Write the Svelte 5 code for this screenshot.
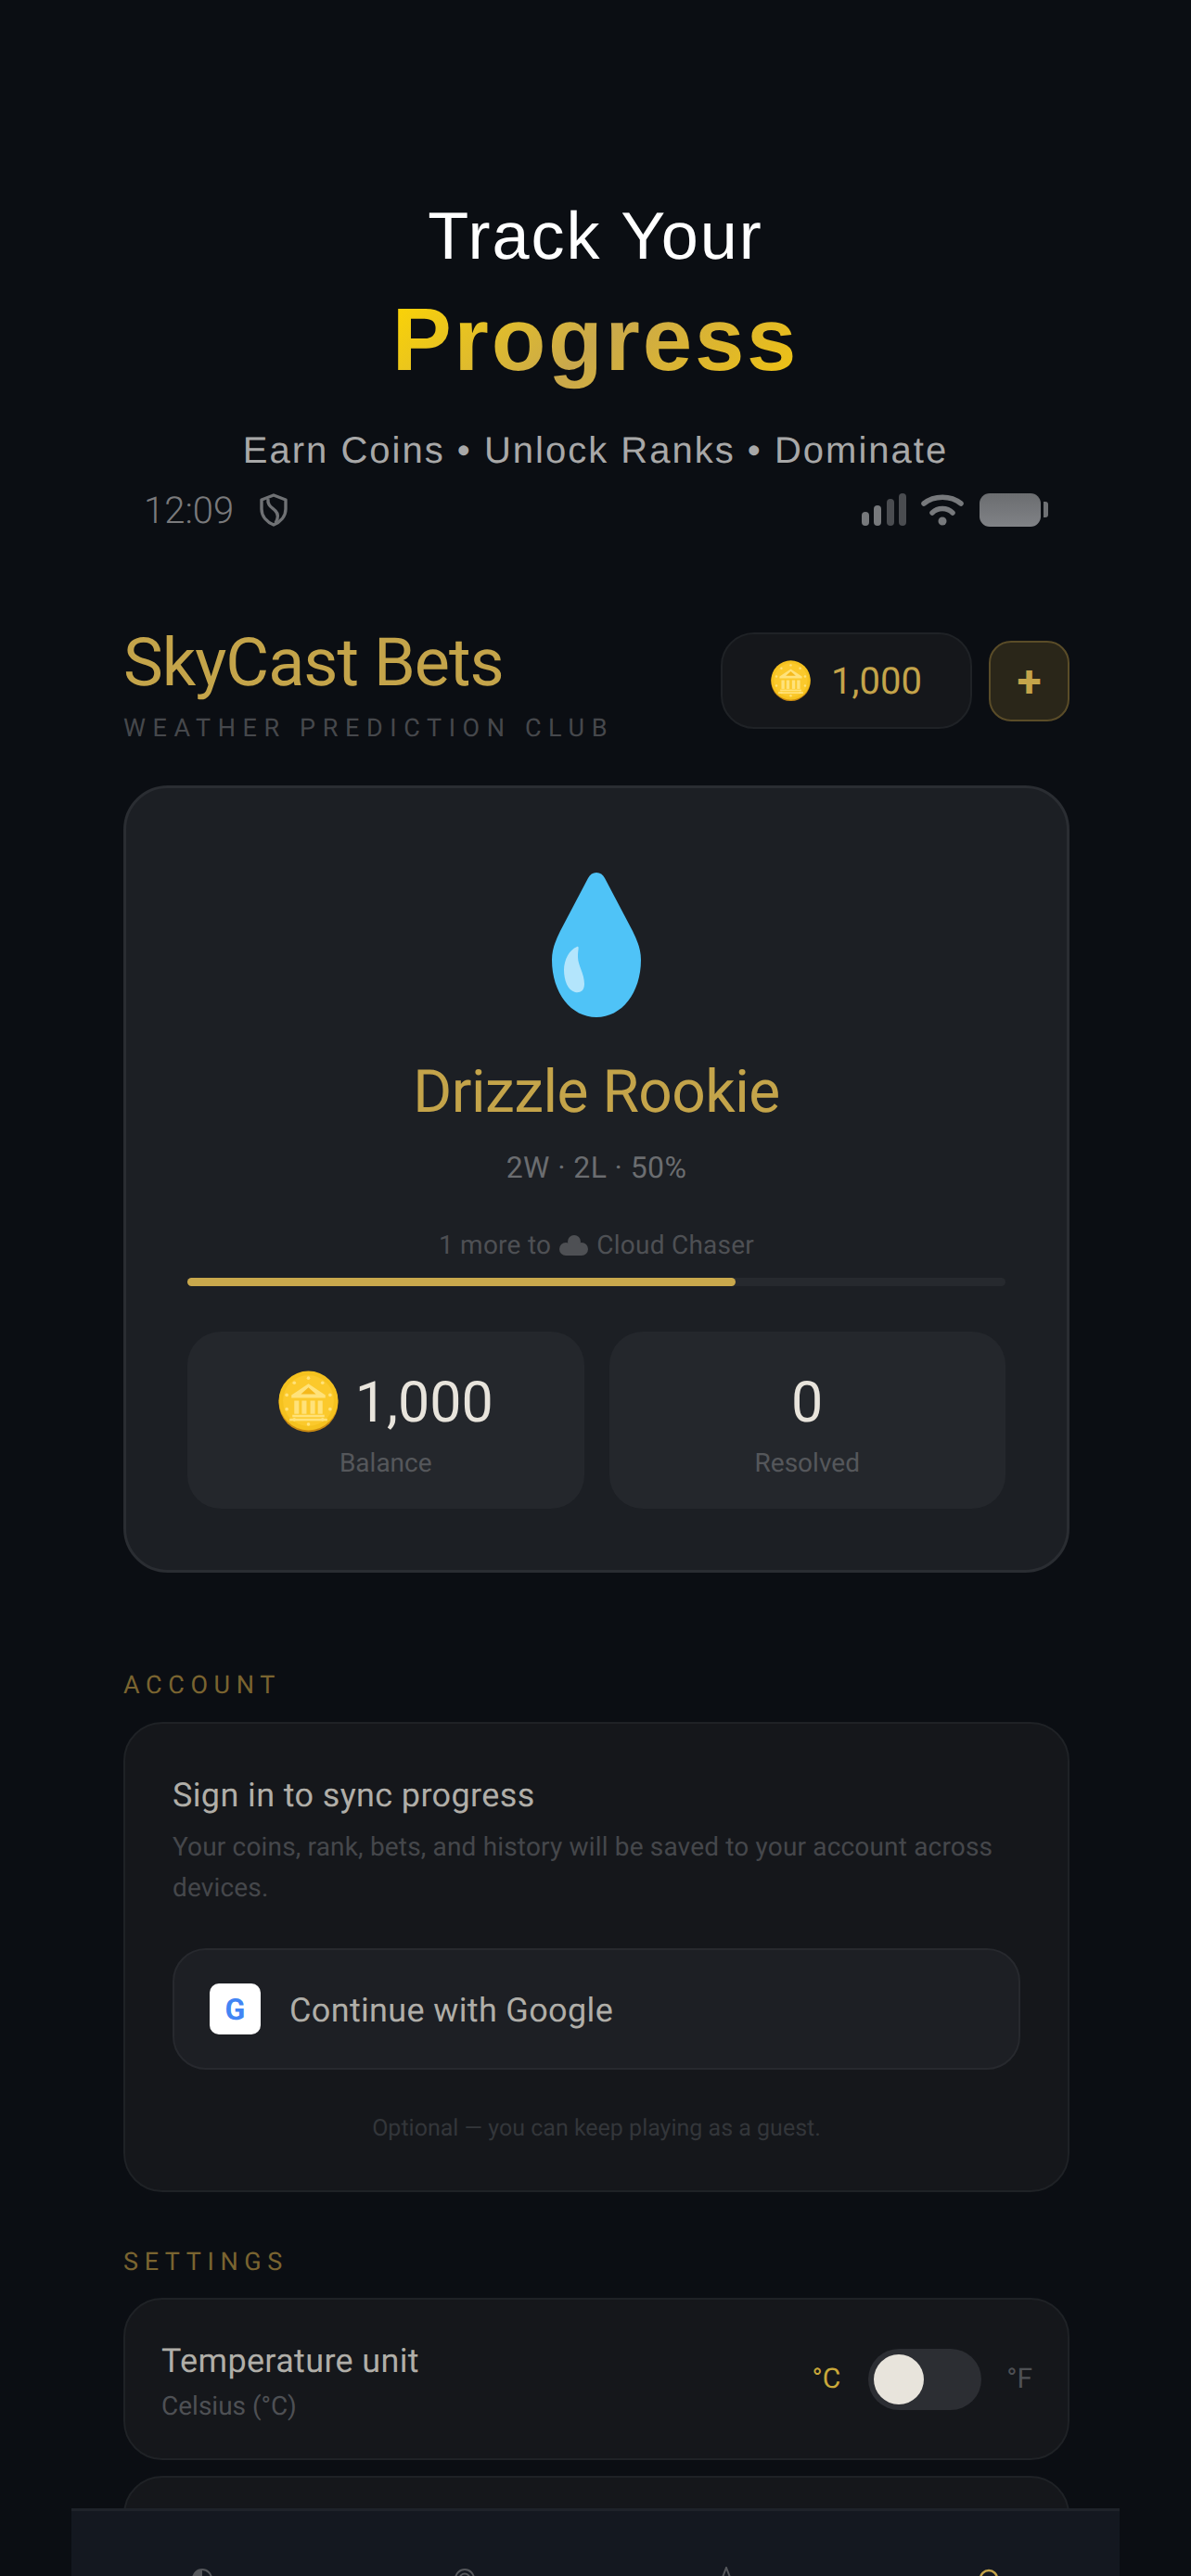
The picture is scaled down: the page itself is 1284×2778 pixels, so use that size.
<script lang="ts">
  const NAV = ['pie', 'target', 'peak', 'user'];
</script>

{#snippet coin()}
  <svg viewBox="0 0 64 66" aria-hidden="true">
    <circle cx="32" cy="34" r="31.5" fill="#c98a12" />
    <circle cx="32" cy="32" r="31.5" fill="#f5c21f" />
    <circle cx="32" cy="32" r="27" fill="#fbc92c" />
    <g fill="#ffe27a">
      <circle cx="32" cy="8" r="1.8" />
      <circle cx="17" cy="13" r="1.8" />
      <circle cx="47" cy="13" r="1.8" />
      <circle cx="9" cy="26" r="1.8" />
      <circle cx="55" cy="26" r="1.8" />
      <circle cx="9" cy="41" r="1.8" />
      <circle cx="55" cy="41" r="1.8" />
      <circle cx="17" cy="52" r="1.8" />
      <circle cx="47" cy="52" r="1.8" />
      <circle cx="32" cy="57" r="1.8" />
      <path d="M32 14 L14 26 V29 H50 V26 Z" />
      <rect x="17" y="32" width="5" height="14" />
      <rect x="25" y="32" width="5" height="14" />
      <rect x="34" y="32" width="5" height="14" />
      <rect x="42" y="32" width="5" height="14" />
      <rect x="15" y="47" width="34" height="2.5" />
      <rect x="12" y="51" width="40" height="2.5" />
    </g>
    <path d="M32 18 L24 25 H40 Z" fill="#f5b91c" />
  </svg>
{/snippet}

<div class="page">
  <header class="hero">
    <div class="hero-line">Track Your</div>
    <div class="hero-big">Progress</div>
    <div class="hero-sub">Earn Coins • Unlock Ranks • Dominate</div>
  </header>

  <div class="phone">
    <div class="status">
      <div class="status-left">
        <span class="time">12:09</span>
        <svg class="shield" viewBox="0 0 30 36" aria-hidden="true">
          <path d="M15 2 L28 7 V17 C28 25 22 31 15 34 C8 31 2 25 2 17 V7 Z" fill="none" stroke="#6f7174" stroke-width="3.4" stroke-linejoin="round" />
          <path d="M9 6 C8 13 13 15 17 19 C20 22 20 27 17 32" fill="none" stroke="#6f7174" stroke-width="3.4" />
        </svg>
      </div>
      <div class="status-right">
        <svg class="signal" viewBox="0 0 48 36" aria-hidden="true">
          <rect x="0" y="20" width="8" height="15" rx="4" fill="#77797c" />
          <rect x="13" y="13" width="8" height="22" rx="4" fill="#77797c" />
          <rect x="27" y="6" width="8" height="29" rx="4" fill="#4a4c50" />
          <rect x="40" y="0" width="8" height="35" rx="4" fill="#4a4c50" />
        </svg>
        <svg class="wifi" viewBox="0 0 46 36" aria-hidden="true">
          <path d="M3 11 C14 2 32 2 43 11" fill="none" stroke="#77797c" stroke-width="5.5" stroke-linecap="round" />
          <path d="M12 21 C18 15 28 15 34 21" fill="none" stroke="#77797c" stroke-width="5.5" stroke-linecap="round" />
          <circle cx="23" cy="30" r="4.5" fill="#77797c" />
        </svg>
        <span class="battery"><span class="battery-tip"></span></span>
      </div>
    </div>

    <main class="content">
      <div class="top">
        <div>
          <h1 class="brand">SkyCast Bets</h1>
          <div class="tagline">WEATHER PREDICTION CLUB</div>
        </div>
        <div class="wallet">
          <div class="pill">
            <span class="coin-sm">{@render coin()}</span>
            <span>1,000</span>
          </div>
          <button class="plus">+</button>
        </div>
      </div>

      <section class="rank-card">
        <svg class="drop" viewBox="0 0 96 158" aria-hidden="true">
          <path d="M48 1 C52 1 55 3 57 7 L87 64 C92 74 96 84 96 95 C96 131 75 157 48 157 C21 157 0 131 0 95 C0 84 4 74 9 64 L39 7 C41 3 44 1 48 1 Z" fill="#4fc3f7" />
          <path d="M27 81 C30 80 28 84 28 92 C28 101 35 110 35 121 C35 129 30 131 25 130 C17 128 13 117 13 106 C13 95 19 84 27 81 Z" fill="#b3e5fc" />
        </svg>
        <h2 class="rank-name">Drizzle Rookie</h2>
        <div class="record">2W · 2L · 50%</div>
        <div class="next">
          1 more to
          <svg class="cloud" viewBox="0 0 33 22" aria-hidden="true">
            <g fill="#4e5054">
              <circle cx="17" cy="7" r="7" />
              <circle cx="8" cy="15" r="7" />
              <circle cx="25" cy="15" r="7" />
              <rect x="8" y="10" width="17" height="12" />
            </g>
          </svg>
          Cloud Chaser
        </div>
        <div class="bar"><div class="bar-fill" style="width: 67%"></div></div>
        <div class="stats">
          <div class="stat">
            <div class="stat-value"><span class="coin-lg">{@render coin()}</span>1,000</div>
            <div class="stat-label">Balance</div>
          </div>
          <div class="stat">
            <div class="stat-value">0</div>
            <div class="stat-label">Resolved</div>
          </div>
        </div>
      </section>

      <div class="section-label account-label">ACCOUNT</div>
      <section class="account-card">
        <div class="sign-title">Sign in to sync progress</div>
        <p class="sign-desc">Your coins, rank, bets, and history will be saved to your account across devices.</p>
        <button class="google">
          <span class="g-box">G</span>
          <span class="google-text">Continue with Google</span>
        </button>
        <div class="optional">Optional — you can keep playing as a guest.</div>
      </section>

      <div class="section-label settings-label">SETTINGS</div>
      <section class="setting">
        <div class="setting-text">
          <div class="setting-title">Temperature unit</div>
          <div class="setting-sub">Celsius (°C)</div>
        </div>
        <div class="unit-switch">
          <span class="unit on">°C</span>
          <span class="toggle"><span class="knob"></span></span>
          <span class="unit">°F</span>
        </div>
      </section>
      <section class="setting next-setting"></section>
    </main>

    <nav class="nav">
      {#each NAV as item, i (item)}
        <div class="nav-item">
          <svg viewBox="0 0 48 48" aria-hidden="true">
            {#if i === 0}
              <circle cx="24" cy="13" r="10" fill="none" stroke="#55575b" stroke-width="2" />
              <path d="M24 3 A10 10 0 0 0 24 23 Z" fill="#55575b" />
            {:else if i === 1}
              <circle cx="24" cy="13" r="10" fill="none" stroke="#55575b" stroke-width="2" />
              <circle cx="24" cy="13" r="5.5" fill="none" stroke="#55575b" stroke-width="2" />
            {:else if i === 2}
              <path d="M24 1 L36 32 H12 Z" fill="none" stroke="#55575b" stroke-width="2" />
            {:else}
              <circle cx="24" cy="13" r="9" fill="none" stroke="#c4a44a" stroke-width="2.5" />
            {/if}
          </svg>
        </div>
      {/each}
    </nav>
  </div>
</div>

<style>
  :global(body) {
    margin: 0;
    background: #0b0e13;
  }

  .page {
    height: 2778px;
    overflow: hidden;
    display: flex;
    flex-direction: column;
    align-items: center;
    font-family: Roboto, sans-serif;
    text-rendering: geometricPrecision;
    background: #0b0e13;
  }

  .hero {
    padding-top: 210px;
    text-align: center;
    font-family: 'Liberation Sans', Arial, sans-serif;
  }

  .hero-line {
    font-size: 72px;
    line-height: 90px;
    letter-spacing: 2px;
    color: #fff;
  }

  .hero-big {
    display: inline-block;
    margin-top: 12px;
    font-size: 96px;
    line-height: 110px;
    font-weight: 700;
    letter-spacing: 2.8px;
    background: linear-gradient(135deg, #ffd700, #c9a84c, #f1c40f);
    -webkit-background-clip: text;
    background-clip: text;
    color: transparent;
  }

  .hero-sub {
    margin-top: 40px;
    font-size: 40px;
    line-height: 48px;
    letter-spacing: 2px;
    color: #a8a8a8;
  }

  .phone {
    position: relative;
    width: 1132px;
    flex: 1;
    min-height: 0;
    padding-top: 16px;
  }

  .status {
    display: flex;
    justify-content: space-between;
    align-items: center;
    height: 48px;
    padding: 0 76px 0 79px;
  }

  .status-left,
  .status-right {
    display: flex;
    align-items: center;
  }

  .time {
    font-size: 40px;
    font-weight: 300;
    color: #7a7a7c;
  }

  .shield {
    width: 30px;
    height: 36px;
    margin-left: 28px;
  }

  .signal {
    width: 48px;
    height: 36px;
  }

  .wifi {
    width: 46px;
    height: 36px;
    margin-left: 16px;
  }

  .battery {
    position: relative;
    width: 66px;
    height: 36px;
    margin-left: 17px;
    margin-right: 10px;
    border-radius: 11px;
    background: linear-gradient(#6b6d70, #808286);
  }

  .battery-tip {
    position: absolute;
    left: 69px;
    top: 9px;
    width: 5px;
    height: 17px;
    border-radius: 0 3px 3px 0;
    background: #6f7174;
  }

  .content {
    padding: 0 55px 0 57px;
  }

  .top {
    display: flex;
    justify-content: space-between;
    align-items: center;
    margin-top: 99px;
  }

  .brand {
    margin: 0;
    font-size: 72px;
    line-height: 84px;
    font-weight: 400;
    letter-spacing: -1px;
    color: #c4a44a;
  }

  .tagline {
    margin-top: 12px;
    font-size: 27px;
    line-height: 32px;
    letter-spacing: 7.6px;
    color: #46484c;
  }

  .wallet {
    display: flex;
    align-items: center;
    gap: 18px;
    margin-top: -6px;
  }

  .pill {
    display: flex;
    align-items: center;
    justify-content: center;
    gap: 22px;
    width: 271px;
    height: 104px;
    box-sizing: border-box;
    border: 2px solid #1f2226;
    border-radius: 36px;
    background: #15171b;
    font-size: 40px;
    color: #c4a44a;
  }

  .coin-sm {
    display: block;
    width: 43px;
  }

  .coin-lg {
    display: block;
    width: 65px;
    margin-right: 18px;
  }

  .coin-sm svg,
  .coin-lg svg {
    display: block;
    width: 100%;
  }

  .plus {
    width: 87px;
    height: 87px;
    padding: 0;
    border: 2px solid #5a4c28;
    border-radius: 24px;
    background: #2a2619;
    font-family: Roboto, sans-serif;
    font-size: 48px;
    font-weight: 700;
    color: #c4a44a;
  }

  .rank-card {
    display: flex;
    flex-direction: column;
    align-items: center;
    box-sizing: border-box;
    height: 849px;
    margin-top: 46px;
    padding: 90px 66px 0;
    border: 3px solid #2a2d32;
    border-radius: 48px;
    background: #1c1f24;
  }

  .drop {
    width: 96px;
    height: 158px;
  }

  .rank-name {
    margin: 42px 0 0;
    font-size: 64px;
    line-height: 76px;
    font-weight: 400;
    letter-spacing: -0.5px;
    color: #c4a44a;
  }

  .record {
    margin-top: 23px;
    font-size: 32px;
    line-height: 40px;
    letter-spacing: 0.4px;
    color: #6b6d70;
  }

  .next {
    display: flex;
    align-items: center;
    gap: 8px;
    margin-top: 46px;
    font-size: 28px;
    line-height: 36px;
    letter-spacing: 0.25px;
    color: #4e5054;
  }

  .cloud {
    width: 33px;
    height: 22px;
  }

  .bar {
    width: 100%;
    height: 9px;
    margin-top: 17px;
    border-radius: 5px;
    background: #26292e;
  }

  .bar-fill {
    height: 100%;
    border-radius: 5px;
    background: #c9a84c;
  }

  .stats {
    display: grid;
    grid-template-columns: 1fr 1fr;
    gap: 27px;
    width: 100%;
    margin-top: 49px;
  }

  .stat {
    display: flex;
    flex-direction: column;
    align-items: center;
    height: 191px;
    box-sizing: border-box;
    padding-top: 40px;
    border-radius: 36px;
    background: #24272c;
  }

  .stat-value {
    display: flex;
    align-items: center;
    height: 72px;
    font-size: 61px;
    color: #e8e4dc;
  }

  .stat-label {
    margin-top: 12px;
    font-size: 28px;
    line-height: 36px;
    color: #55575b;
  }

  .section-label {
    font-size: 27px;
    line-height: 32px;
    letter-spacing: 6.6px;
    color: #7a6430;
  }

  .account-label {
    margin-top: 105px;
  }

  .account-card {
    box-sizing: border-box;
    height: 507px;
    margin-top: 24px;
    padding: 55px 51px 0;
    border: 2px solid #1f2226;
    border-radius: 42px;
    background: #15171b;
  }

  .sign-title {
    font-size: 36px;
    line-height: 44px;
    letter-spacing: 0.37px;
    color: #b0aea8;
  }

  .sign-desc {
    margin: 12px 0 0;
    font-size: 28px;
    line-height: 44px;
    letter-spacing: 0.17px;
    color: #45474b;
  }

  .google {
    display: flex;
    align-items: center;
    gap: 31px;
    width: 100%;
    height: 131px;
    margin-top: 43px;
    padding: 0 38px;
    box-sizing: border-box;
    border: 2px solid #27292e;
    border-radius: 36px;
    background: #1d1f24;
    font-family: Roboto, sans-serif;
    font-size: 36px;
    letter-spacing: 0.35px;
    color: #b0aea8;
    text-rendering: geometricPrecision;
  }

  .google-text {
    margin-top: 3px;
  }

  .g-box {
    display: flex;
    align-items: center;
    justify-content: center;
    width: 55px;
    height: 55px;
    border-radius: 10px;
    background: #fff;
    font-size: 32px;
    font-weight: 700;
    color: #4285f4;
  }

  .optional {
    margin-top: 48px;
    text-align: center;
    font-size: 25px;
    line-height: 32px;
    color: #33363a;
  }

  .settings-label {
    margin-top: 59px;
  }

  .setting {
    display: flex;
    justify-content: space-between;
    align-items: center;
    box-sizing: border-box;
    height: 175px;
    margin-top: 23px;
    padding: 0 38px 0 39px;
    border: 2px solid #1f2226;
    border-radius: 42px;
    background: #15171b;
  }

  .next-setting {
    margin-top: 17px;
  }

  .setting-text {
    margin-top: 6px;
  }

  .setting-title {
    font-size: 36px;
    line-height: 44px;
    letter-spacing: 0.33px;
    color: #b0aea8;
  }

  .setting-sub {
    margin-top: 9px;
    font-size: 28px;
    line-height: 36px;
    color: #4e5054;
  }

  .unit-switch {
    display: flex;
    align-items: center;
    gap: 27px;
  }

  .unit {
    font-size: 30px;
    color: #4e5054;
  }

  .unit.on {
    margin-right: 3px;
    color: #c9a83a;
  }

  .toggle {
    display: block;
    width: 122px;
    height: 66px;
    box-sizing: border-box;
    padding: 6px;
    border-radius: 33px;
    background: #2c2e33;
  }

  .knob {
    display: block;
    width: 54px;
    height: 54px;
    border-radius: 50%;
    background: #e8e4dc;
  }

  .nav {
    position: absolute;
    left: 1px;
    right: 1px;
    bottom: -47px;
    display: grid;
    grid-template-columns: repeat(4, 1fr);
    height: 120px;
    box-sizing: border-box;
    padding-top: 60px;
    border-top: 3px solid #1f232a;
    background: #141820;
  }

  .nav-item {
    display: flex;
    justify-content: center;
  }

  .nav-item svg {
    width: 48px;
    height: 48px;
  }
</style>
